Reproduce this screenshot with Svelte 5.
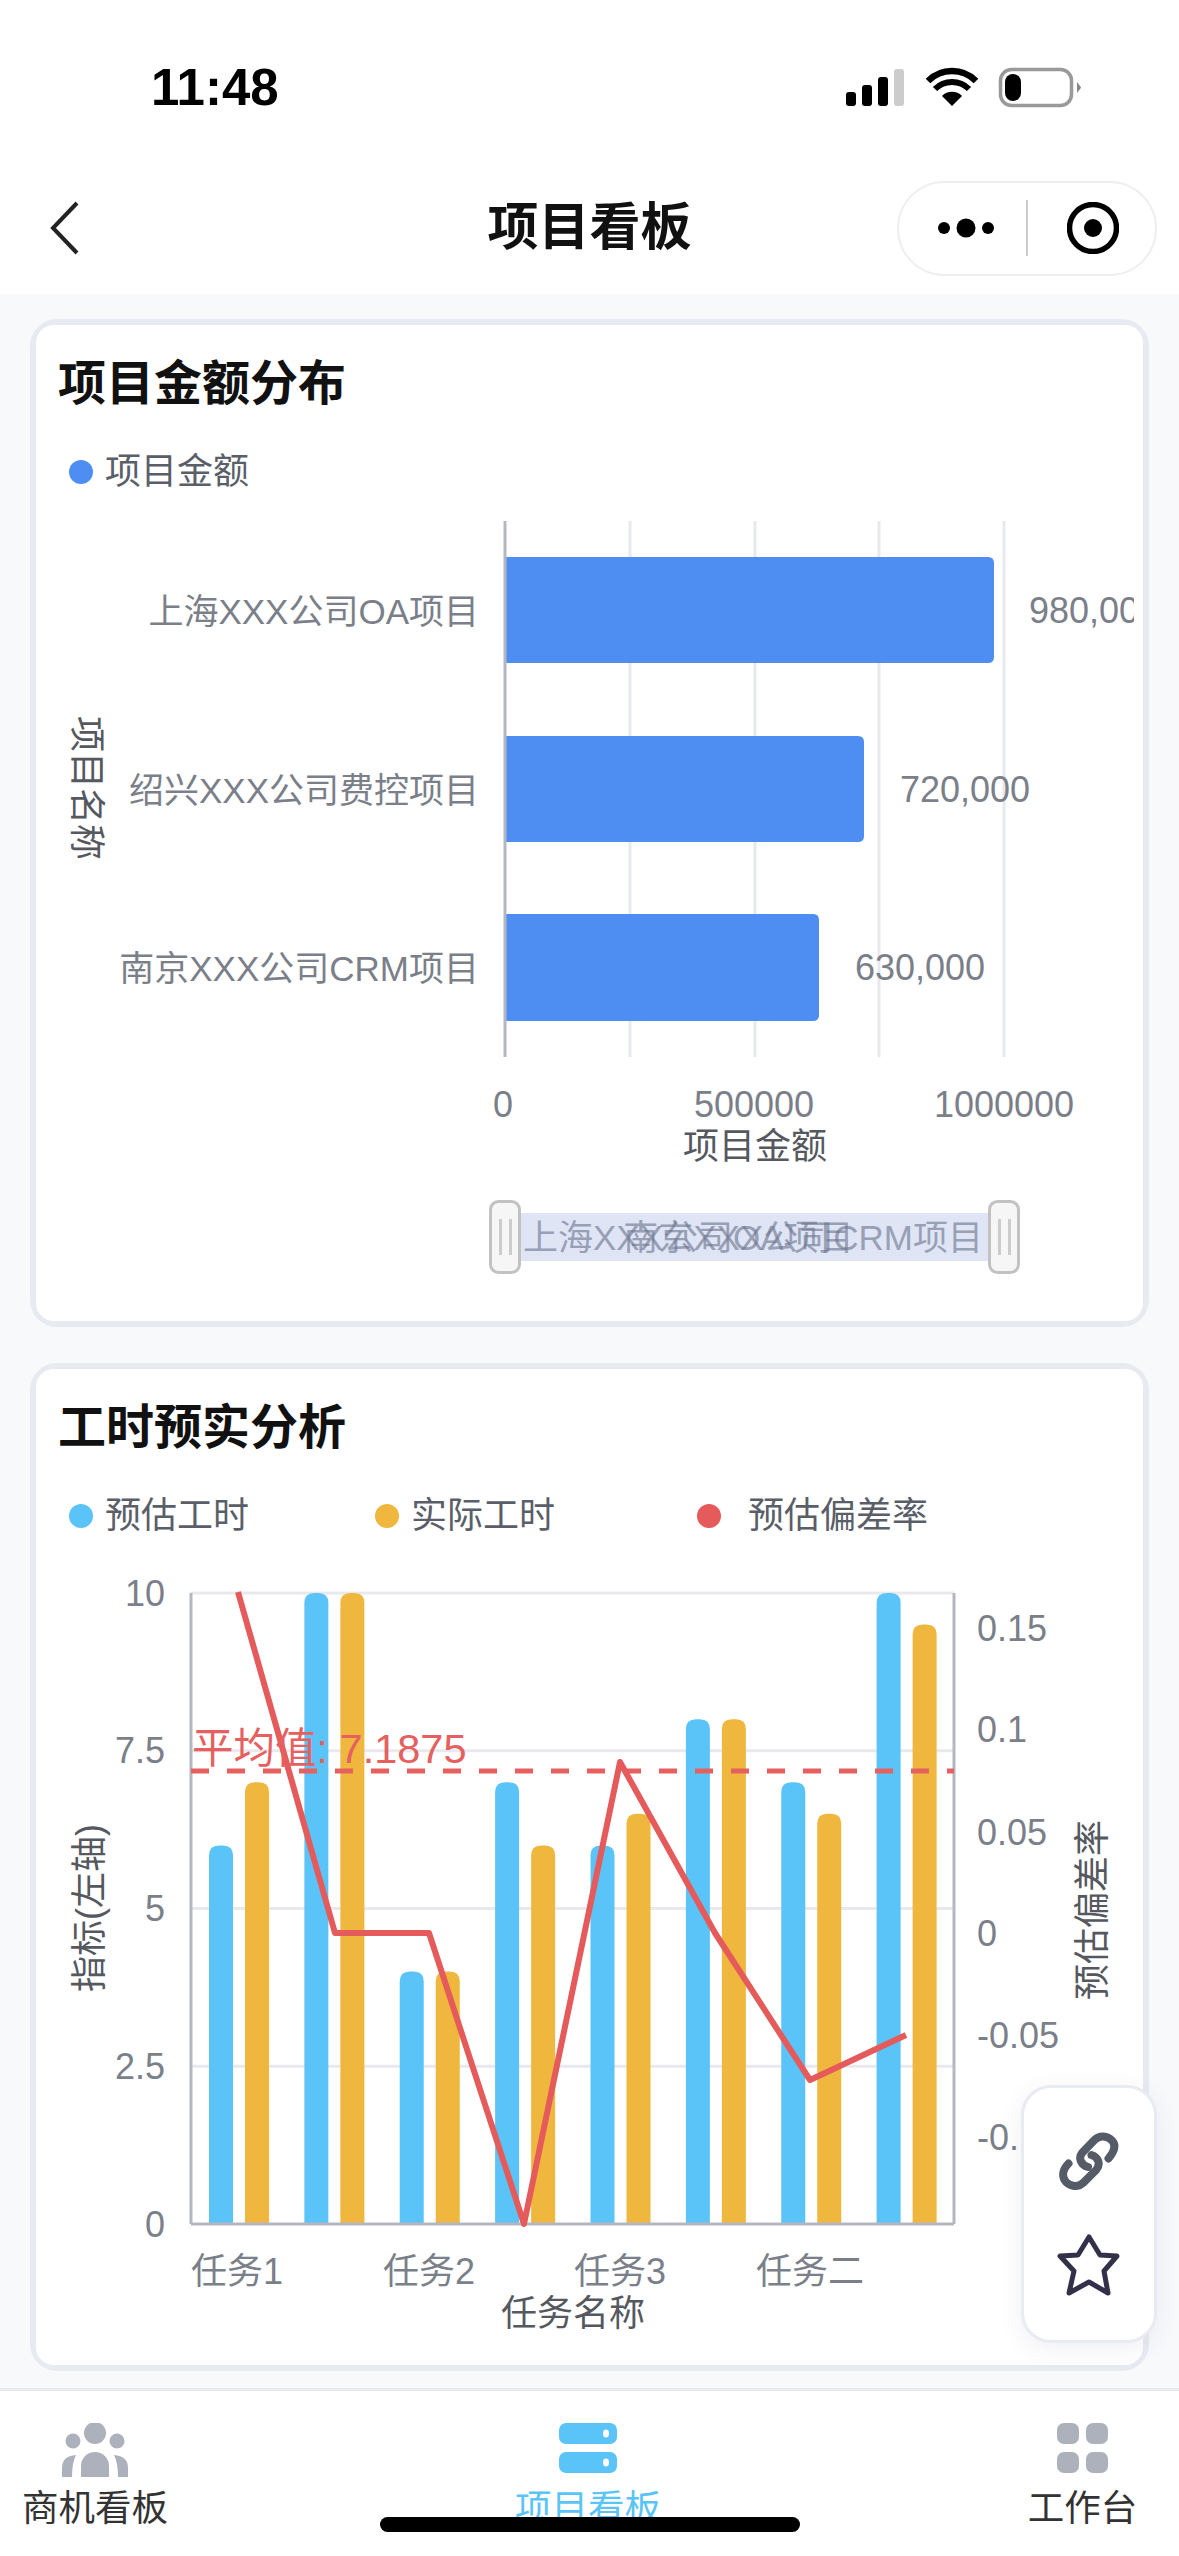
<script>
	// first chart
	const projects = [
		{ name: '上海XXX公司OA项目', end: 994, top: 557, bottom: 663, value: '980,000', labelX: 1029 },
		{ name: '绍兴XXX公司费控项目', end: 864, top: 736, bottom: 842, value: '720,000', labelX: 900 },
		{ name: '南京XXX公司CRM项目', end: 819, top: 914, bottom: 1021, value: '630,000', labelX: 855 }
	];
	const amountGrid = [630, 755, 879, 1004];

	// second chart
	const plot = { left: 191, right: 954, top: 1593, bottom: 2224 };
	const estimate = [6, 10, 4, 7, 6, 8, 7, 10];
	const actual = [7, 10, 4, 6, 6.5, 8, 6.5, 9.5];
	const step = (plot.right - plot.left) / 8;
	const valueY = (v) => plot.bottom - (v / 10) * (plot.bottom - plot.top);
	const leftTicks = [['10', 10], ['7.5', 7.5], ['5', 5], ['2.5', 2.5], ['0', 0]];
	const rightTicks = [['0.15', 1628], ['0.1', 1729], ['0.05', 1832], ['0', 1933], ['-0.05', 2035], ['-0.1', 2137]];
	const taskTicks = [['任务1', 237], ['任务2', 429], ['任务3', 620], ['任务二', 810]];
	const deviation = '238,1592 335,1933 429,1933 524,2224 620,1762 715,1933 810,2080 906,2035';

	function topRounded(x, y, w, bottom, r) {
		return `M${x} ${bottom}V${y + r}Q${x} ${y} ${x + r} ${y}H${x + w - r}Q${x + w} ${y} ${x + w} ${y + r}V${bottom}Z`;
	}
	function rightRounded(x, end, top, bottom, r) {
		return `M${x} ${top}H${end - r}Q${end} ${top} ${end} ${top + r}V${bottom - r}Q${end} ${bottom} ${end - r} ${bottom}H${x}Z`;
	}
</script>

<div class="phone">
	<header class="top">
		<div class="status">
			<span class="time">11:48</span>
			<svg class="status-icons" width="240" height="44" viewBox="846 66 240 44">
				<rect x="846" y="92" width="10" height="14" rx="3" fill="#000" />
				<rect x="862" y="85" width="10" height="21" rx="3" fill="#000" />
				<rect x="878" y="77" width="10" height="29" rx="3" fill="#000" />
				<rect x="894" y="69" width="10" height="37" rx="3" fill="#ccc" />
				<path d="M952 106L942 96A14 14 0 0 1 962 96Z" fill="#000" />
				<path d="M935 89A24 24 0 0 1 969 89" fill="none" stroke="#000" stroke-width="6" />
				<path d="M928 81A34 34 0 0 1 976 81" fill="none" stroke="#000" stroke-width="6.5" />
				<rect x="1000.5" y="69.5" width="71" height="36" rx="11" fill="none" stroke="#999" stroke-width="3.5" />
				<rect x="1005" y="74" width="16" height="27" rx="8" fill="#000" />
				<path d="M1077 82Q1081 87 1081 87.500Q1081 88 1077 93Z" fill="#888" />
			</svg>
		</div>
		<nav class="nav">
			<svg class="back" width="32" height="54" viewBox="0 0 32 54">
				<path d="M28 2L4 27L28 52" fill="none" stroke="#222" stroke-width="4" />
			</svg>
			<h1>项目看板</h1>
			<div class="capsule">
				<svg width="70" height="24" viewBox="0 0 70 24">
					<circle cx="11" cy="12" r="6" fill="#000" />
					<circle cx="33" cy="12" r="9.500" fill="#000" />
					<circle cx="55" cy="12" r="6" fill="#000" />
				</svg>
				<span class="capsule-line"></span>
				<svg width="52" height="52" viewBox="0 0 52 52">
					<circle cx="26" cy="26" r="23.500" fill="none" stroke="#000" stroke-width="5.500" />
					<circle cx="26" cy="26" r="9" fill="#000" />
				</svg>
			</div>
		</nav>
	</header>

	<main class="content">
		<section class="card">
			<h2>项目金额分布</h2>
			<div class="legend">
				<span class="item"><i style="background:#4e8ef2"></i>项目金额</span>
			</div>
			<svg class="chart" width="1107" height="821" viewBox="36 500 1107 821">
				<defs>
					<clipPath id="plot-clip"><rect x="36" y="500" width="1098" height="821" /></clipPath>
				</defs>
				{#each amountGrid as x}
					<line x1={x} x2={x} y1="521" y2="1057" class="grid" />
				{/each}
				{#each projects as p}
					<path d={rightRounded(505, p.end, p.top, p.bottom, 6)} fill="#4e8ef2" />
					<text x="479" y={(p.top + p.bottom) / 2 + 1} text-anchor="end" class="tick category">{p.name}</text>
					<text x={p.labelX} y={(p.top + p.bottom) / 2} class="tick" clip-path="url(#plot-clip)">{p.value}</text>
				{/each}
				<line x1="505" x2="505" y1="521" y2="1057" class="axis" />
				<text class="name" transform="translate(86 788) rotate(90)" text-anchor="middle">项目名称</text>
				<text x="503" y="1104" text-anchor="middle" class="tick">0</text>
				<text x="754" y="1104" text-anchor="middle" class="tick">500000</text>
				<text x="1004" y="1104" text-anchor="middle" class="tick">1000000</text>
				<text x="755" y="1146" text-anchor="middle" class="name">项目金额</text>

				<rect x="521" y="1213" width="467" height="48" fill="#dfe5f5" />
				<text x="523" y="1237" class="brush">上海XXX公司OA项目</text>
				<text x="983" y="1237" text-anchor="end" class="brush">南京XXX公司CRM项目</text>
				{#each [489, 988] as x}
					<rect x={x + 1.500} y="1201.500" width="29" height="71" rx="8" class="handle" />
					<rect x={x + 10} y="1219" width="3" height="36" fill="#ccc" />
					<rect x={x + 20} y="1219" width="3" height="36" fill="#ccc" />
				{/each}
			</svg>
		</section>

		<section class="card">
			<h2>工时预实分析</h2>
			<div class="legend">
				<span class="item"><i style="background:#5ac4f8"></i>预估工时</span>
				<span class="item"><i style="background:#efb73e"></i>实际工时</span>
				<span class="item third"><i style="background:#e55a5a"></i>预估偏差率</span>
			</div>
			<svg class="chart" width="1107" height="821" viewBox="36 1544 1107 821">
				<line x1={plot.left} x2={plot.right} y1={plot.top} y2={plot.top} class="grid" />
				{#each [7.5, 5, 2.5] as v}
					<line x1={plot.left} x2={plot.right} y1={valueY(v)} y2={valueY(v)} class="grid" />
				{/each}
				{#each estimate as v, i}
					<path d={topRounded(209 + step * i, valueY(v), 24, plot.bottom, 10)} fill="#5ac4f8" />
					<path d={topRounded(245 + step * i, valueY(actual[i]), 24, plot.bottom, 10)} fill="#efb73e" />
				{/each}
				<line x1={plot.left} x2={plot.left} y1={plot.top} y2={plot.bottom} class="frame" />
				<line x1={plot.right} x2={plot.right} y1={plot.top} y2={plot.bottom} class="frame" />
				<line x1={plot.left} x2={plot.right} y1={plot.bottom} y2={plot.bottom} class="frame" />

				{#each leftTicks as [label, v]}
					<text x="165" y={valueY(v)} text-anchor="end" class="tick">{label}</text>
				{/each}
				{#each rightTicks as [label, y]}
					<text x="977" {y} class="tick">{label}</text>
				{/each}
				{#each taskTicks as [label, x]}
					<text {x} y="2271" text-anchor="middle" class="tick">{label}</text>
				{/each}
				<text x="573" y="2313" text-anchor="middle" class="name">任务名称</text>
				<text class="name" transform="translate(89 1908) rotate(-90)" text-anchor="middle">指标(左轴)</text>
				<text class="name" transform="translate(1092 1910) rotate(-90)" text-anchor="middle">预估偏差率</text>

				<line x1={plot.left} x2={plot.right} y1="1771" y2="1771" class="mean" />
				<polyline points={deviation} class="deviation" />
				<text x="192" y="1748" class="mean-label">平均值: 7.1875</text>
			</svg>
		</section>
	</main>

	<aside class="float">
		<svg width="60" height="60" viewBox="1059 2130 60 60">
			<path d="M1108.500 2158.500C1114 2152 1117 2146 1112 2140.500C1107 2135.500 1100 2135 1095 2139.500L1082 2153C1078 2158 1081 2165 1088 2167" class="link" />
			<path d="M1068.500 2163.500C1063 2169 1061 2176 1066 2182C1071 2187 1078 2187.500 1083 2183L1096.500 2169.500C1101 2164 1098 2157 1091.500 2155" class="link" />
		</svg>
		<svg width="66" height="66" viewBox="1056 2236 66 66">
			<path d="M1089 2240L1100 2258L1117 2259L1104 2274L1108 2296L1089 2285L1069 2296L1074 2274L1060 2259L1078 2258Z" fill="none" stroke="#33304a" stroke-width="5" stroke-linejoin="round" />
		</svg>
	</aside>

	<footer class="tabs">
		<div class="tab">
			<svg width="70" height="54" viewBox="0 0 70 54" fill="#adb1bb">
				<circle cx="35" cy="10" r="11" />
				<circle cx="13" cy="18" r="7.500" />
				<circle cx="57" cy="18" r="7.500" />
				<path d="M21 54V43A14 14 0 0 1 49 43V54Z" />
				<path d="M2 54V45Q2 33 16 32Q12 40 12 54Z" />
				<path d="M68 54V45Q68 33 54 32Q58 40 58 54Z" />
			</svg>
			<span>商机看板</span>
		</div>
		<div class="tab active">
			<svg width="58" height="54" viewBox="0 0 58 54">
				<rect width="58" height="21" rx="7" fill="#5ac4f8" />
				<rect y="29" width="58" height="21" rx="7" fill="#5ac4f8" />
				<ellipse cx="47" cy="10.500" rx="3" ry="4" fill="#fff" />
				<ellipse cx="47" cy="39.500" rx="3" ry="4" fill="#fff" />
			</svg>
			<span>项目看板</span>
		</div>
		<div class="tab">
			<svg width="52" height="54" viewBox="0 0 52 54" fill="#adb1bb">
				<rect width="22" height="21" rx="7" />
				<rect x="29" width="22" height="21" rx="7" />
				<rect y="29" width="22" height="21" rx="7" />
				<rect x="29" y="29" width="22" height="21" rx="7" />
			</svg>
			<span>工作台</span>
		</div>
	</footer>

	<div class="home"></div>
</div>

<style>
	:global(body) {
		margin: 0;
	}

	.phone {
		position: relative;
		width: 1179px;
		height: 2556px;
		overflow: hidden;
		display: flex;
		flex-direction: column;
		background: #f8f9fb;
		font-family: "Liberation Sans", "Noto Sans CJK SC", sans-serif;
		color: #5a5e68;
	}

	.top {
		height: 294px;
		background: #fff;
		flex: none;
	}

	.status {
		height: 130px;
		display: flex;
		justify-content: space-between;
		padding: 66px 93px 0 151px;
		box-sizing: border-box;
	}

	.time {
		font-size: 51px;
		line-height: 44px;
		font-weight: 700;
		color: #000;
	}

	.nav {
		height: 164px;
		box-sizing: border-box;
		display: flex;
		align-items: center;
		padding: 32px 22px 0 49px;
		position: relative;
	}

	.back {
		flex: none;
	}

	h1 {
		position: absolute;
		left: 0;
		right: 0;
		margin: 0;
		text-align: center;
		font-size: 51px;
		line-height: 60px;
		font-weight: 700;
		color: #111;
	}

	.capsule {
		margin-left: auto;
		width: 260px;
		height: 95px;
		box-sizing: border-box;
		border: 2px solid #eee;
		border-radius: 48px;
		background: #fff;
		display: flex;
		align-items: center;
		padding-left: 34px;
	}

	.capsule-line {
		width: 2px;
		height: 56px;
		background: #ccc;
		margin: 0 39px 0 23px;
	}

	.content {
		flex: 1;
		display: flex;
		flex-direction: column;
		gap: 36px;
		padding: 25px 30px 0;
	}

	.card {
		position: relative;
		height: 1008px;
		box-sizing: border-box;
		border: 3px solid #e8eaf2;
		border-radius: 27px;
		padding: 3px;
		background: #fff;
		flex: none;
	}

	/* second ring: tighter corners leave the thin white arc */
	.card::after {
		content: "";
		position: absolute;
		inset: 0;
		border: 3px solid #e8eaf2;
		border-radius: 21px;
		pointer-events: none;
	}

	.card h2 {
		margin: 0;
		padding: 31px 0 0 22px;
		font-size: 48px;
		line-height: 56px;
		font-weight: 700;
		color: #111;
	}

	.legend {
		display: flex;
		gap: 126px;
		height: 40px;
		margin-top: 40px;
		padding-left: 33px;
		font-size: 36px;
		line-height: 40px;
		color: #5a5e68;
	}

	.item {
		display: flex;
		align-items: center;
		gap: 12px;
		white-space: nowrap;
	}

	.item i {
		width: 24px;
		height: 24px;
		border-radius: 50%;
		flex: none;
	}

	.item.third {
		margin-left: 16px;
		gap: 27px;
	}

	.chart {
		display: block;
		margin-top: 8px;
	}

	.chart text {
		font-size: 36px;
		dominant-baseline: central;
	}

	.chart .category,
	.chart .brush {
		font-size: 35px;
	}

	.tick {
		fill: #7b7f8a;
	}

	.name {
		fill: #55585f;
	}

	.brush {
		fill: #6e7690;
		opacity: 0.62;
	}

	.grid {
		stroke: #e8e9ee;
		stroke-width: 3;
	}

	.axis,
	.frame {
		stroke: #b4b7c2;
		stroke-width: 3;
	}

	.handle {
		fill: #f6f6f6;
		stroke: #c2c2c2;
		stroke-width: 3;
	}

	.mean {
		stroke: #e5605f;
		stroke-width: 5;
		stroke-dasharray: 18 18;
	}

	.deviation {
		fill: none;
		stroke: #e55a5a;
		stroke-width: 6;
		stroke-linejoin: round;
	}

	.chart .mean-label {
		fill: #e5605f;
		font-size: 41.500px;
	}

	.float {
		position: absolute;
		left: 1021px;
		top: 2085px;
		width: 136px;
		height: 258px;
		box-sizing: border-box;
		border: 3px solid #e9ebf2;
		border-radius: 30px;
		background: #fff;
		box-shadow: 0 6px 24px rgba(60, 70, 110, 0.08);
		display: flex;
		flex-direction: column;
		align-items: center;
		gap: 43px;
		padding-top: 42px;
	}

	.link {
		fill: none;
		stroke: #555c68;
		stroke-width: 8;
		stroke-linecap: round;
	}

	.tabs {
		flex: none;
		height: 168px;
		box-sizing: border-box;
		border-top: 3px solid #e8eaf0;
		background: #fff;
		display: grid;
		grid-template-columns: 190px 796px 193px;
		padding-top: 32px;
	}

	.tab {
		display: flex;
		flex-direction: column;
		align-items: center;
		gap: 10px;
		font-size: 36.500px;
		line-height: 44px;
		color: #333;
	}

	.tab.active {
		color: #5ac4f8;
	}

	.home {
		position: absolute;
		left: 380px;
		top: 2517px;
		width: 420px;
		height: 15px;
		border-radius: 8px;
		background: #000;
	}
</style>
